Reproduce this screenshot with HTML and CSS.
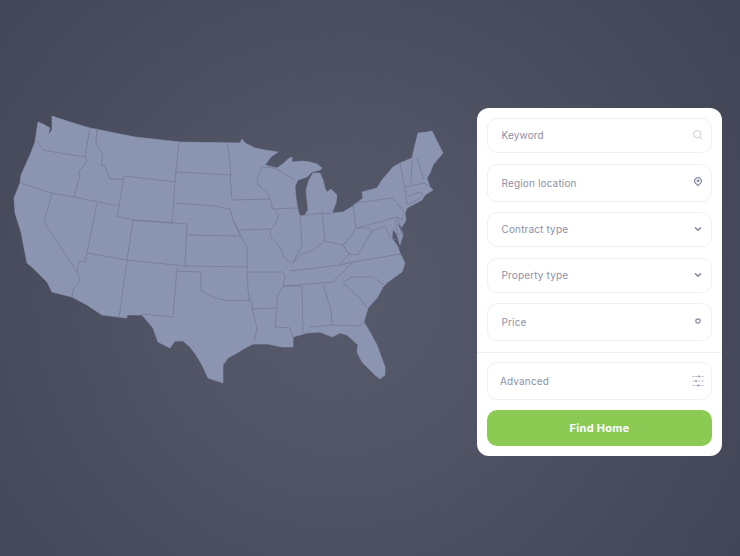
FILE: index.html
```html
<!DOCTYPE html>
<html lang="en">
<head>
<meta charset="utf-8">
<title>Find Home</title>
<link rel="stylesheet" href="styles.css">
</head>
<body>
<main class="page">
  <section class="map-area">
    <svg class="map" viewBox="0 0 477 556" width="477" height="556" aria-label="Map of the United States">
      <path class="land" d="M38 122L43 124L50 128L48 135L52 130L52 116L70 122L90 128L135 137L180 142L240 143L242 139L245 143L255 148L265 150L278 152L271 157L265 165L277 168L284 163L288 159L292 157L292 162L302 161L310 162L317 164L322 168L320 170L312 172L307 177L298 180L295 186L296 198L298 210L300 216L305 215L308 210L307 200L306 190L309 180L313 173L320 173L323 180L325 188L327 192L331 189L337 195L336 203L332 213L343 212L353 206L363 198L362 192L377 188L382 180L393 167L400 163L412 158L415 145L418 133L427 132L432 131L437 141L443 153L433 165L430 173L427 178L430 187L433 190L425 195L422 200L407 208L405 213L406 220L402 227L397 223L403 235L400 245L397 235L393 229L392 238L398 247L400 253L405 263L402 272L388 282L383 287L377 298L368 308L364 322L371 334L377 345L381 356L385 367L385 375L380 379L375 375L368 368L362 362L357 352L358 345L347 335L340 333L332 337L320 332L307 333L293 337L293 347L282 347L268 344L253 344L247 347L237 353L228 358L223 365L223 383L208 378L202 365L196 355L190 347L183 341L175 341L170 348L158 342L153 328L142 315L127 315L127 318L102 315L87 305L72 297L52 292L47 282L33 268L27 263L24 248L21 232L15 213L14 198L20 183L21 175L30 155L35 142Z"/>
      <path class="lines" d="M37 141L43 150L60 153L85 157L87 161L79 172L80 175L74 197M90 128L85 157M97 128L96 143L103 155L101 165L105 166L110 179L124 179M20 183L52 193L74 197L119 206M52 193L44 222L77 272M87 253L85 262L79 261L77 272L80 281L73 290L72 297M124 176L175 182L172 223L133 220L117 216L119 206L124 176M179 141L175 182M176 172L231 175M227 143L229 155L231 175L230 177L232 198M174 203L215 206L230 209L233 220L240 235M133 220L187 224L185 266M187 235L240 236M97 203L87 253M133 220L127 260M87 253L127 260L185 266L247 267M127 260L119 318M177 267L173 317L142 314M177 271L201 272L201 291L215 298L229 301L250 300L252 303L252 308L257 328L254 342M247 272L248 290L250 302M243 240L247 247L247 272L283 272L285 276L283 286L277 297L277 308L252 309M277 308L275 327L290 328L293 337M283 286L302 286L303 333M283 286L333 282L345 270L353 262M290 271L340 265L353 262L400 254M323 284L331 310L332 325M310 327L332 325L359 326L364 322M343 283L360 298L367 308M343 282L352 277L364 277L373 277L384 285M232 200L270 199L272 207L279 215L274 226L270 230L271 238L280 247L284 257L291 263M238 230L270 229M233 220L238 230L243 240M262 167L257 179L258 185L269 195L270 199M272 209L297 208M262 167L275 168L295 180M300 216L302 245L293 263L300 255L313 250L325 241L343 245M300 216L322 213L325 241M322 213L332 214M353 206L356 228L350 237L343 245L349 254L358 255L365 243L372 231L378 229L385 226L390 237L397 240M353 206L355 203L393 198L397 204L403 208M357 228L397 217M349 254L340 264M356 228L368 228L372 231M400 163L405 190L407 205M412 160L411 185M417 158L424 180M405 187L424 183L430 187M407 196L420 192L423 195M408 205L420 198M397 204L404 212L402 220L397 217L403 233M395 220L398 235L403 233"/>
    </svg>
  </section>
  <form class="card">
    <div class="field wide-gap"><span>Keyword</span>
      <svg class="icon light" viewBox="0 0 12 12"><circle cx="5.200" cy="5.200" r="3.600"/><path d="M7.900 7.900L10.200 10.200"/></svg>
    </div>
    <div class="field tall"><span>Region location</span>
      <svg class="icon thick" viewBox="0 0 12 12"><path d="M6 8.600L3.600 6.200A3.300 3.300 0 1 1 8.400 6.200Z"/><circle cx="6" cy="3.800" r=".9"/></svg>
    </div>
    <div class="field wide-gap"><span>Contract type</span>
      <svg class="icon" viewBox="0 0 12 12"><path class="bold" d="M3 4.500L6 7.200L9 4.500"/></svg>
    </div>
    <div class="field"><span>Property type</span>
      <svg class="icon" viewBox="0 0 12 12"><path class="bold" d="M3 4.500L6 7.200L9 4.500"/></svg>
    </div>
    <div class="field tall wide-gap"><span>Price</span>
      <svg class="icon thick" viewBox="0 0 12 12"><circle cx="6" cy="5" r="2.200"/></svg>
    </div>
    <hr class="divider">
    <div class="field tall advanced"><span>Advanced</span>
      <svg class="icon sliders" viewBox="0 0 12 12"><path class="dash" d="M.5 1.500H11.500M.5 6H11.500M.5 10.500H11.500"/><path class="bold" d="M7 .5V2.500M4 5V7M6.500 9.500V11.500"/></svg>
    </div>
    <button class="submit" type="button">Find Home</button>
  </form>
</main>
</body>
</html>
```
FILE: styles.css
```css
* { box-sizing: border-box; }
html, body { margin: 0; height: 100%; }
body {
  background: radial-gradient(circle at 46% 54%, #565a6b 0%, #505465 35%, #484b5b 70%, #414454 100%);
  font-family: Inter, "Open Sans", sans-serif;
  overflow: hidden;
}
.page { display: flex; align-items: flex-start; width: 740px; height: 556px; }
.map-area { width: 477px; flex: none; }
.map { display: block; filter: blur(.3px); }
.land { fill: #8b94b1; stroke: #8b94b1; stroke-width: .6; stroke-linejoin: round; }
.lines { fill: none; stroke: #747a96; stroke-width: .75; stroke-linejoin: round; }
.card {
  width: 245px;
  margin-top: 108px;
  padding: 10px;
  background: #fff;
  border-radius: 12px;
  display: flex;
  flex-direction: column;
  gap: 10px;
}
.field {
  height: 35px;
  flex: none;
  padding: 0 7px 1px 13.5px;
  border: 1.5px solid #eff0f7;
  border-radius: 10px;
  display: flex;
  align-items: center;
  justify-content: space-between;
  color: #8c8fa9;
  font-size: 10px;
  letter-spacing: .15px;
}
.wide-gap { margin-bottom: 1px; }
.tall { height: 38px; }
.advanced { padding-left: 12px; }
.icon { width: 12px; height: 12px; flex: none; fill: none; stroke: #85889f; stroke-width: 1; }
.icon .bold { stroke-width: 1.6; }
.thick { stroke-width: 1.2; }
.light { stroke: #c8cada; }
.sliders { stroke: #9b9eb5; stroke-width: .8; }
.dash { stroke-dasharray: 2 1; }
.divider { margin: 0 -10px -1px; border: 0; border-top: 1px solid #eff0f7; height: 0; flex: none; }
.submit {
  height: 36px;
  flex: none;
  border: 0;
  border-radius: 10px;
  background: #8bcb54;
  color: #fff;
  font: 700 11px Inter, "Open Sans", sans-serif;
  letter-spacing: .3px;
}
```
